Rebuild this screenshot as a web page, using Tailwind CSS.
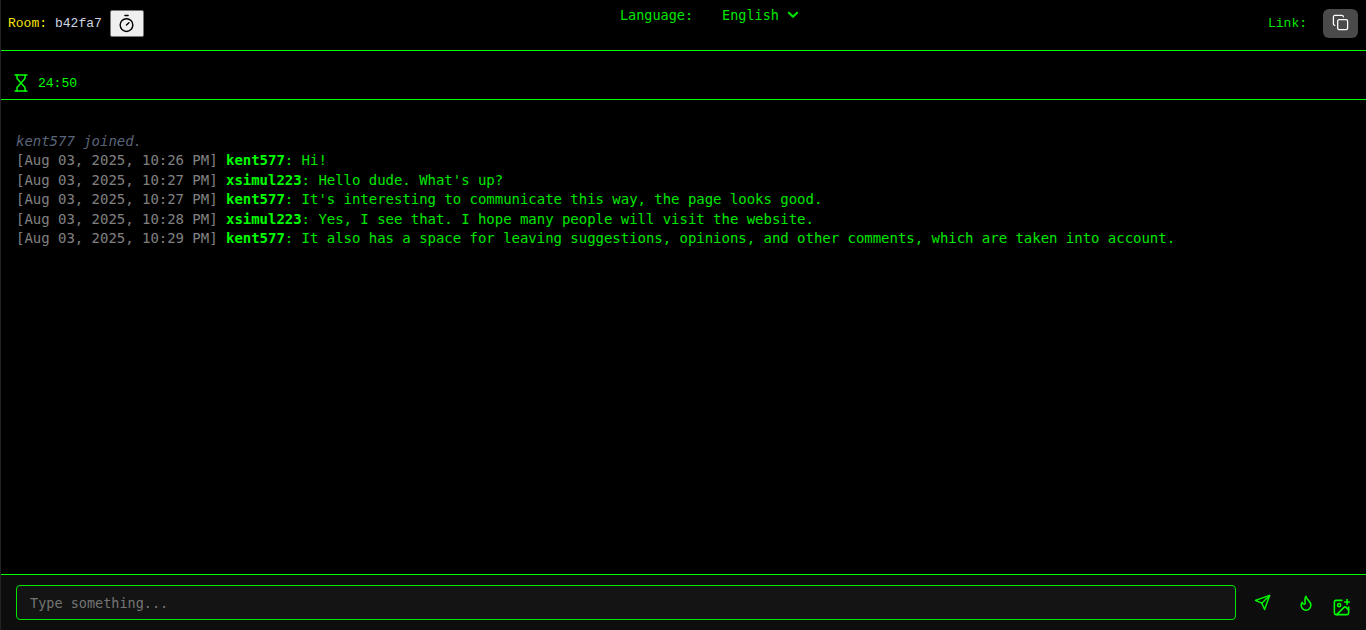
<!doctype html>
<html lang="en">
<head>
<meta charset="utf-8">
<title>Chat room</title>
<script src="https://cdn.jsdelivr.net/npm/@tailwindcss/browser@4"></script>
</head>
<body class="bg-black">
<div class="h-[630px] flex flex-col overflow-hidden border-l border-[#222] bg-black text-[#00ff00] font-['DejaVu_Sans_Mono',monospace]">

  <!-- top bar -->
  <header class="h-[51px] shrink-0 flex justify-between border-b border-[#00ff00] pl-[7px] pr-2 font-['Liberation_Mono',monospace] text-[13px]">
    <div class="flex items-start gap-2 pt-[10px]">
      <div class="h-[27px] flex items-center">
        <span class="text-[#f5e50a]">Room:</span>
        <span class="ml-2 text-[#cfd6e0]">b42fa7</span>
      </div>
      <button class="w-[34px] h-[27px] flex items-center justify-center rounded-[2px] border border-[#777] bg-[#efefef] text-black">
        <svg class="w-[19px] h-[19px] mb-[1px]" fill="none" stroke="currentColor" stroke-width="1.8" stroke-linecap="round" stroke-linejoin="round" viewBox="0 0 24 24">
          <path d="M10 2h4"></path>
          <path d="M12 14l3-3"></path>
          <circle cx="12" cy="14" r="8"></circle>
        </svg>
      </button>
    </div>

    <div class="flex items-start pt-[7px] ml-[8px] text-[#00e600] font-['DejaVu_Sans_Mono',monospace] text-[13.5px]">
      <span class="h-[17px] leading-[17px]">Language:</span>
      <span class="h-[17px] leading-[17px] ml-[29px]">English</span>
      <svg class="w-[14px] h-[14px] ml-[7px] mt-[1px]" fill="none" stroke="currentColor" stroke-width="3.6" stroke-linecap="round" stroke-linejoin="round" viewBox="0 0 24 24">
        <path d="M5 8l7 7 7-7"></path>
      </svg>
    </div>

    <div class="flex items-start pt-[9px]">
      <span class="h-[29px] leading-[29px] text-[#00e600]">Link:</span>
      <button class="ml-[16px] w-[35px] h-[29px] flex items-center justify-center rounded-md bg-[#4a4a4a] text-white">
        <svg class="w-[17px] h-[17px] mb-[2px] mr-[1px]" fill="none" stroke="currentColor" stroke-width="1.8" stroke-linecap="round" stroke-linejoin="round" viewBox="0 0 24 24">
          <rect x="8" y="8" width="14" height="14" rx="2"></rect>
          <path d="M4 16c-1.1 0-2-.9-2-2V4c0-1.1.9-2 2-2h10c1.1 0 2 .9 2 2"></path>
        </svg>
      </button>
    </div>
  </header>

  <!-- timer -->
  <div class="h-[49px] shrink-0 flex items-center gap-[10px] pl-[13px] pt-[16px] border-b border-[#00ff00] font-['Liberation_Mono',monospace] text-[13px]">
    <svg class="w-[14px] h-[18px]" fill="none" stroke="currentColor" stroke-width="1.5" stroke-linecap="round" stroke-linejoin="round" viewBox="0 0 14 18">
      <path d="M1 1h12"></path>
      <path d="M1 17h12"></path>
      <path d="M3 1v3.500L11 13.500V17"></path>
      <path d="M11 1v3.500L3 13.500V17"></path>
    </svg>
    <span class="mt-[1px]">24:50</span>
  </div>

  <!-- messages -->
  <main class="flex-1 min-h-0 px-[15px] pt-[31.5px] text-[14px] leading-[1.4] tracking-[-0.03px] text-[#00e600]">
    <p class="italic text-[#5a6478]">kent577 joined.</p>
    <p><span class="text-[#808080]">[Aug 03, 2025, 10:26 PM]</span> <b class="text-[#00ff00]">kent577</b>: Hi!</p>
    <p><span class="text-[#808080]">[Aug 03, 2025, 10:27 PM]</span> <b class="text-[#00ff00]">xsimul223</b>: Hello dude. What's up?</p>
    <p><span class="text-[#808080]">[Aug 03, 2025, 10:27 PM]</span> <b class="text-[#00ff00]">kent577</b>: It's interesting to communicate this way, the page looks good.</p>
    <p><span class="text-[#808080]">[Aug 03, 2025, 10:28 PM]</span> <b class="text-[#00ff00]">xsimul223</b>: Yes, I see that. I hope many people will visit the website.</p>
    <p><span class="text-[#808080]">[Aug 03, 2025, 10:29 PM]</span> <b class="text-[#00ff00]">kent577</b>: It also has a space for leaving suggestions, opinions, and other comments, which are taken into account.</p>
  </main>

  <!-- input bar -->
  <footer class="h-[56px] shrink-0 flex items-start border-t border-[#00ff00] bg-[#0d0d0d] pl-[15px] pt-[10px]">
    <input class="w-[1220px] h-[35px] px-[13px] rounded-[4px] border border-[#00e600] bg-[#141414] text-[13.5px] outline-none placeholder:text-[#757575]" placeholder="Type something...">
    <svg class="w-[17px] h-[17px] ml-[18px] mt-[9px]" fill="none" stroke="currentColor" stroke-width="2" stroke-linecap="round" stroke-linejoin="round" viewBox="0 0 24 24">
      <path d="M22 2L15 22l-4-9-9-4z"></path>
      <path d="M22 2L11 13"></path>
    </svg>
    <svg class="w-[18px] h-[18px] ml-[26px] mt-[9px]" fill="none" stroke="currentColor" stroke-width="2" stroke-linecap="round" stroke-linejoin="round" viewBox="0 0 24 24">
      <path d="M12 3c.5 3 2 4.500 4 6.500 1.500 1.500 2.500 3.500 2.500 5.500a6.500 6.500 0 0 1-13 0c0-1.500.5-3 1.500-4 .2 1.500 1 2.500 2.500 2.500 1 0 1.500-1 1.500-2 0-1-.5-2-.5-3.500 0-2 .5-3.500 1.500-5z"></path>
    </svg>
    <svg class="w-[19px] h-[19px] ml-[17px] mt-[13px]" fill="none" stroke="currentColor" stroke-width="2" stroke-linecap="round" stroke-linejoin="round" viewBox="0 0 24 24">
      <path d="M16 5h6"></path>
      <path d="M19 2v6"></path>
      <path d="M21 11.500V19a2 2 0 0 1-2 2H5a2 2 0 0 1-2-2V5a2 2 0 0 1 2-2h7.500"></path>
      <path d="M21 15l-3.100-3.100a2 2 0 0 0-2.800 0L6 21"></path>
      <circle cx="9" cy="9" r="2"></circle>
    </svg>
  </footer>
</div>
</body>
</html>
